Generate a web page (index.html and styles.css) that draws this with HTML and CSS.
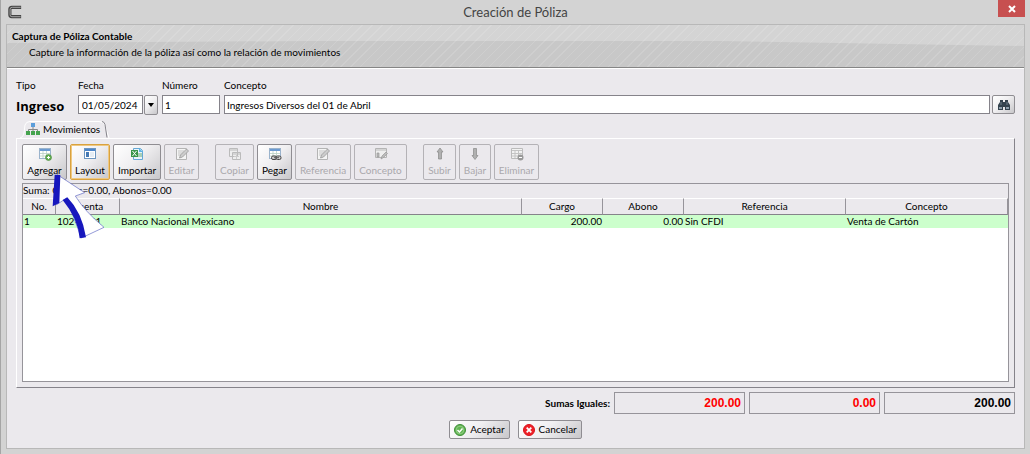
FILE: index.html
```html
<!DOCTYPE html>
<html lang="es">
<head>
<meta charset="utf-8">
<title>Creación de Póliza</title>
<link rel="stylesheet" href="styles.css">
</head>
<body>
<svg class="defs" aria-hidden="true">
  <symbol id="sheet" viewBox="0 0 14 14">
    <rect x="1.5" y="1.5" width="11" height="10" fill="#fff" stroke="#9ab3cc"/>
    <path d="M2 3h10" stroke="#6c9bd2" stroke-width="2"/>
    <path d="M2 6.500h10M2 9h10M5 4v7M8.500 4v7" stroke="#b9d0c4" stroke-width=".8"/>
  </symbol>
  <symbol id="note" viewBox="0 0 14 14">
    <path d="M1.500 1.500h10v11h-10z" fill="#f4f4f4" stroke="#b4b4b4"/>
    <path d="M3 4h6M3 6h5M3 8h3" stroke="#c4c4c4"/>
    <path d="M4.500 11l1-3 6-6 2 2-6 6z" fill="#ccc" stroke="#999" stroke-width=".8"/>
  </symbol>
</svg>
<main class="window">
  <header class="titlebar">
    <svg class="app-icon" viewBox="0 0 16 14"><path d="M14 2H4Q2 2 2 4v6Q2 12 4 12h10" fill="none" stroke="#444" stroke-width="3.400"/><path d="M13.500 2H4.500Q2.200 2 2.200 4v6q0 2 2 2h9.300" fill="none" stroke="#aaa" stroke-width="1"/></svg>
    <h1 class="title">Creación de Póliza</h1>
    <button class="close" aria-label="Cerrar"><svg viewBox="0 0 8 8"><path d="M1 1l6 6M7 1L1 7" stroke="#fff" stroke-width="2"/></svg></button>
  </header>
  <div class="content">
    <section class="banner">
      <h2 class="banner-title">Captura de Póliza Contable</h2>
      <p class="banner-text">Capture la información de la póliza así como la relación de movimientos</p>
    </section>
    <form class="form">
      <div class="fields">
        <div class="field"><span class="label">Tipo</span><strong class="kind">Ingreso</strong></div>
        <div class="field"><label class="label" for="fecha">Fecha</label>
          <div class="combo"><input class="input date" id="fecha" value="01/05/2024"><button type="button" class="drop" aria-label="Elegir fecha"><svg viewBox="0 0 6 4"><path d="M0 0h6L3 4z"/></svg></button></div></div>
        <div class="field"><label class="label" for="numero">Número</label><input class="input" id="numero" value="1"></div>
        <div class="field"><label class="label" for="concepto">Concepto</label>
          <div class="combo search"><input class="input" id="concepto" value="Ingresos Diversos del 01 de Abril"><button type="button" class="find" aria-label="Buscar"><svg viewBox="0 0 12 12"><path d="M2 1h3v2h2V1h3v2l2 3v5H7V8H5v3H0V6l2-3z" fill="#34434e"/><path d="M1 8h3v2H1zM8 8h3v2H8z" fill="#8fa0ad"/><path d="M3 3v3M9 3v3" stroke="#71818d"/></svg></button></div></div>
      </div>
      <div class="tabs">
        <svg class="tab-shape" viewBox="0 0 92 17"><path d="M0 17q3 0 4-5l1-8Q6 .5 10 .5h69q5 0 6 4l4 12.500" fill="#ebe9ed" stroke="#fff"/><path d="M82 .5q2 0 3 3l2 13" fill="none" stroke="#85838a"/></svg>
        <button type="button" class="tab"><svg class="tab-icon" viewBox="0 0 14 13"><rect x="5" y="0" width="4" height="4" fill="#5c9edb"/><path d="M7 4v3M2.500 9V6.500h9V9M7 6v3" fill="none" stroke="#888"/><path d="M0 8h4v4H0zM5 8h4v4H5zM10 8h4v4h-4z" fill="#45a34e"/></svg>Movimientos</button>
      </div>
      <section class="panel">
        <div class="toolbar">
          <div class="group edit">
            <button type="button" class="tool"><svg viewBox="0 0 14 14"><use href="#sheet"/><circle cx="10.500" cy="10.500" r="3" fill="#65ad54" stroke="#458b35" stroke-width=".6"/><path d="M9 10.500h3M10.500 9v3" stroke="#fff"/></svg>Agregar</button>
            <button type="button" class="tool active"><svg viewBox="0 0 14 14"><rect x="1.500" y="1.500" width="11" height="10" fill="#fff" stroke="#6d96c0"/><path d="M2 3h10" stroke="#4c85c9" stroke-width="2"/><path d="M3 5h3v5H3z" fill="#4579b4"/><path d="M7 5h4v5H7z" fill="#e6edf4"/></svg>Layout</button>
            <button type="button" class="tool"><svg viewBox="0 0 14 14"><path d="M3.500 1.500h7l2 2v9h-9z" fill="#eaf3fa" stroke="#65a8d4"/><path d="M9 1v4h4" fill="#5fb5e5"/><path d="M1 3h7v7H1z" fill="#39964a"/><path d="M2.500 4l4 5M6.500 4l-4 5" stroke="#fff"/><path d="M8 7h4M8 9h4" stroke="#69ad70"/></svg>Importar</button>
            <button type="button" class="tool" disabled><svg viewBox="0 0 14 14"><use href="#note"/></svg>Editar</button>
          </div>
          <div class="group copy">
            <button type="button" class="tool" disabled><svg viewBox="0 0 14 14"><path d="M1.500 1.500h8v8h-8zM4.500 5.500h8v7h-8z" fill="#eee" stroke="#bbb"/><path d="M2 3h7M5 7h7" stroke="#bbb"/><path d="M6 9.500h5M8.500 8v4" stroke="#ccc"/></svg>Copiar</button>
            <button type="button" class="tool"><svg viewBox="0 0 14 14"><use href="#sheet"/><rect x="3.500" y="9" width="5" height="3.500" rx="1.500" fill="#ccc" stroke="#444"/><rect x="8" y="9" width="5" height="3.500" rx="1.500" fill="#ccc" stroke="#444"/><path d="M6 10.700h5" stroke="#555"/></svg>Pegar</button>
            <button type="button" class="tool" disabled><svg viewBox="0 0 14 14"><use href="#note"/></svg>Referencia</button>
            <button type="button" class="tool" disabled><svg viewBox="0 0 14 14"><path d="M1.500 1.500h11v9h-11z" fill="#eee" stroke="#b4b4b4"/><path d="M2 3h10" stroke="#bbb"/><path d="M3 6v4h2V6zM7 12l1-3 4-4 1.500 1.500-4 4z" fill="#bbb" stroke="#999" stroke-width=".7"/></svg>Concepto</button>
          </div>
          <div class="group move">
            <button type="button" class="tool" disabled><svg viewBox="0 0 14 14"><path d="M7 1l3 4H8.500v7h-3V5H4z" fill="#b0b0b0" stroke="#888" stroke-width=".7"/></svg>Subir</button>
            <button type="button" class="tool" disabled><svg viewBox="0 0 14 14"><path d="M7 12.500l3-4H8.500v-7h-3v7H4z" fill="#b0b0b0" stroke="#888" stroke-width=".7"/></svg>Bajar</button>
            <button type="button" class="tool" disabled><svg viewBox="0 0 14 14"><path d="M1.500 1.500h11v10h-11z" fill="#f2f2f2" stroke="#bbb"/><path d="M2 3.500h10M2 6.500h10M2 9h10M5 3v8M8.500 3v8" stroke="#c4c4c4"/><circle cx="10.500" cy="10.500" r="3" fill="#999"/><path d="M9 10.500h3" stroke="#fff"/></svg>Eliminar</button>
          </div>
          <svg class="pointer" viewBox="0 0 162 198"><path d="M16 2L98 56l-28 10q28 46 86 94l-68 32L44 72 14 92z" fill="#fff" stroke="#5f68c4" stroke-width="2"/><path d="M8 2l17 1-3 84-20 10zM32 78l14-8Q90 115 102 190l-19 3Q78 134 32 78z" fill="#1717bd"/></svg>
        </div>
        <div class="grid">
          <p class="summary">Suma: Cargos=0.00, Abonos=0.00</p>
          <table class="table">
            <colgroup><col class="c-no"><col class="c-account"><col><col class="c-amount"><col class="c-amount"><col class="c-text"><col class="c-text"></colgroup>
            <thead><tr><th>No.</th><th>Cuenta</th><th>Nombre</th><th>Cargo</th><th>Abono</th><th>Referencia</th><th>Concepto</th></tr></thead>
            <tbody><tr><td>1</td><td>102-0001</td><td>Banco Nacional Mexicano</td><td class="num">200.00</td><td class="num">0.00</td><td>Sin CFDI</td><td>Venta de Cartón</td></tr></tbody>
          </table>
        </div>
      </section>
      <div class="totals">
        <span class="totals-label" id="sumas">Sumas Iguales:</span>
        <input class="total red" aria-labelledby="sumas" value="200.00" readonly>
        <input class="total red" aria-labelledby="sumas" value="0.00" readonly>
        <input class="total" aria-labelledby="sumas" value="200.00" readonly>
      </div>
      <div class="actions">
        <button type="button" class="action"><svg viewBox="0 0 12 12"><circle cx="6" cy="6" r="5.500" fill="#62b553" stroke="#3f8e38"/><circle cx="6" cy="6" r="3.800" fill="none" stroke="#a5d99a" stroke-width=".7"/><path d="M3.500 6l2 2 3-3.500" fill="none" stroke="#fff" stroke-width="1.500"/></svg>Aceptar</button>
        <button type="button" class="action"><svg viewBox="0 0 12 12"><circle cx="6" cy="6" r="5.500" fill="#ee2229" stroke="#d9141c"/><path d="M3.700 3.700l4.600 4.600M8.300 3.700L3.700 8.300" stroke="#fff" stroke-width="1.800"/></svg>Cancelar</button>
      </div>
    </form>
  </div>
</main>
</body>
</html>
```
FILE: styles.css
```css
* { box-sizing: border-box; }
body { margin: 0; font: 10px/13px Lato, "Noto Sans", sans-serif; color: #000; }
button, input { font: inherit; color: inherit; margin: 0; padding: 0; }
h1, h2, p { margin: 0; }
svg { display: block; flex: none; }
.defs { position: absolute; width: 0; height: 0; }
.window { min-height: 100vh; display: flex; flex-direction: column; background: #d3d3d3; border-left: 1px solid #a5a5a5; padding: 0 5px 5px; }
.titlebar { display: grid; grid-template-columns: 32px 1fr 32px; height: 24px; align-items: center; }
.app-icon { width: 15px; height: 14px; margin-left: 2px; }
.title { text-align: center; font: 13px/18px Lato, "Open Sans", sans-serif; color: #444; }
.close { align-self: start; width: 27px; height: 17px; border: 0; background: #c75050; display: grid; place-items: center; justify-self: end; }
.close svg { width: 8px; height: 8px; }
.content { flex: 1; display: flex; flex-direction: column; border: 1px solid #b8b8b8; background: #ebe9ed; }
.banner { position: relative; height: 43px; padding: 5px; border-bottom: 1px solid #858585; box-shadow: 0 1px #fff; background: #d4d4d4; }
.banner::before { content: ""; position: absolute; inset: 0; background: #c8c8c8; clip-path: polygon(0 18px, 30% 16px, 70% 16px, 100% 21px, 100% 100%, 0 100%); }
.banner::after { content: ""; position: absolute; inset: 0; background: repeating-linear-gradient(135deg, transparent 0 6px, rgba(255,255,255,.12) 6px 7px); }
.banner-title, .banner-text { position: relative; z-index: 1; }
.banner-title { font-size: 10px; line-height: 13px; }
.banner-text { padding: 3px 17px; }
.form { flex: 1; display: flex; flex-direction: column; padding: 11px 9px 9px; }
.fields { display: grid; grid-template-columns: 58px 80px 58px 1fr; column-gap: 4px; }
.label { display: block; height: 16px; }
.kind { display: block; font: bold 13px/23px "Open Sans", sans-serif; color: #000; }
.combo { display: flex; gap: 1px; }
.search { gap: 2px; }
.input { width: 100%; min-width: 0; height: 19px; border: 1px solid #85838a; background: #fff; padding: 0 2px; }
.date { width: 65px; padding: 0 3px; }
.drop, .find, .tool, .action { border: 1px solid #8f8d92; border-radius: 2px; background: linear-gradient(135deg, #fff 0%, #f0eff1 45%, #c8c7ca 100%); }
.drop { width: 14px; height: 20px; display: grid; place-items: center; }
.drop svg { width: 6px; height: 4px; }
.find { width: 23px; height: 19px; flex: none; display: grid; place-items: center; }
.find svg { width: 12px; height: 12px; }
.tabs { position: relative; height: 17px; margin-top: 3px; }
.tab-shape { position: absolute; left: 4px; top: 0; width: 92px; height: 17px; z-index: 1; }
.tab { position: relative; z-index: 2; display: flex; align-items: center; gap: 3px; height: 17px; border: 0; background: none; padding: 0 10px; }
.tab-icon { width: 14px; height: 13px; }
.panel { flex: 1; display: flex; flex-direction: column; border: 1px solid #85838a; border-top-color: #fff; border-left-color: #fff; padding: 5px; }
.toolbar { position: relative; display: flex; gap: 16px; }
.group { display: grid; column-gap: 3px; }
.edit { grid-template-columns: 45px 40px 48px 35px; }
.copy { grid-template-columns: 39px 35px 56px 53px; }
.move { grid-template-columns: 33px 32px 45px; }
.tool { height: 36px; display: flex; flex-direction: column; align-items: center; gap: 3px; padding: 2px 0; white-space: nowrap; }
.tool svg { width: 14px; height: 14px; }
.tool:disabled { color: #aaa8ac; background: none; border-color: #b4b2b6; }
.tool.active { border-color: #d9a23f; box-shadow: inset 0 0 0 1px #efc881; }
.pointer { position: absolute; left: 30px; top: 30px; width: 54px; height: 66px; z-index: 3; }
.grid { flex: 1; margin-top: 3px; border: 1px solid #96949a; background: #fff; }
.summary { height: 14px; background: #ebe9ed; }
.table { width: 100%; table-layout: fixed; border-collapse: separate; border-spacing: 0; }
.c-no { width: 33px; }
.c-account { width: 64px; }
.c-amount { width: 81px; }
.c-text { width: 162px; }
th { height: 17px; padding: 0; font-weight: normal; background: #ebe9ed; border-top: 1px solid #fff; border-right: 1px solid #96949a; border-bottom: 1px solid #85838a; }
td { height: 13px; padding: 0 1px; background: #cfc; white-space: nowrap; }
.num { text-align: right; }
.totals { display: flex; gap: 4px; justify-content: flex-end; align-items: center; margin-top: 4px; }
.totals-label { font-weight: bold; }
.total { width: 131px; height: 22px; border: 1px solid #96949a; background: #ebe9ed; padding: 0 3px; text-align: right; font: bold 12px "Liberation Sans", sans-serif; color: #000; }
.total.red { color: #f00; }
.actions { display: flex; justify-content: center; gap: 8px; margin-top: 6px; }
.action { height: 19px; display: flex; align-items: center; gap: 4px; padding: 0 4px; }
.action svg { width: 12px; height: 12px; }
```
